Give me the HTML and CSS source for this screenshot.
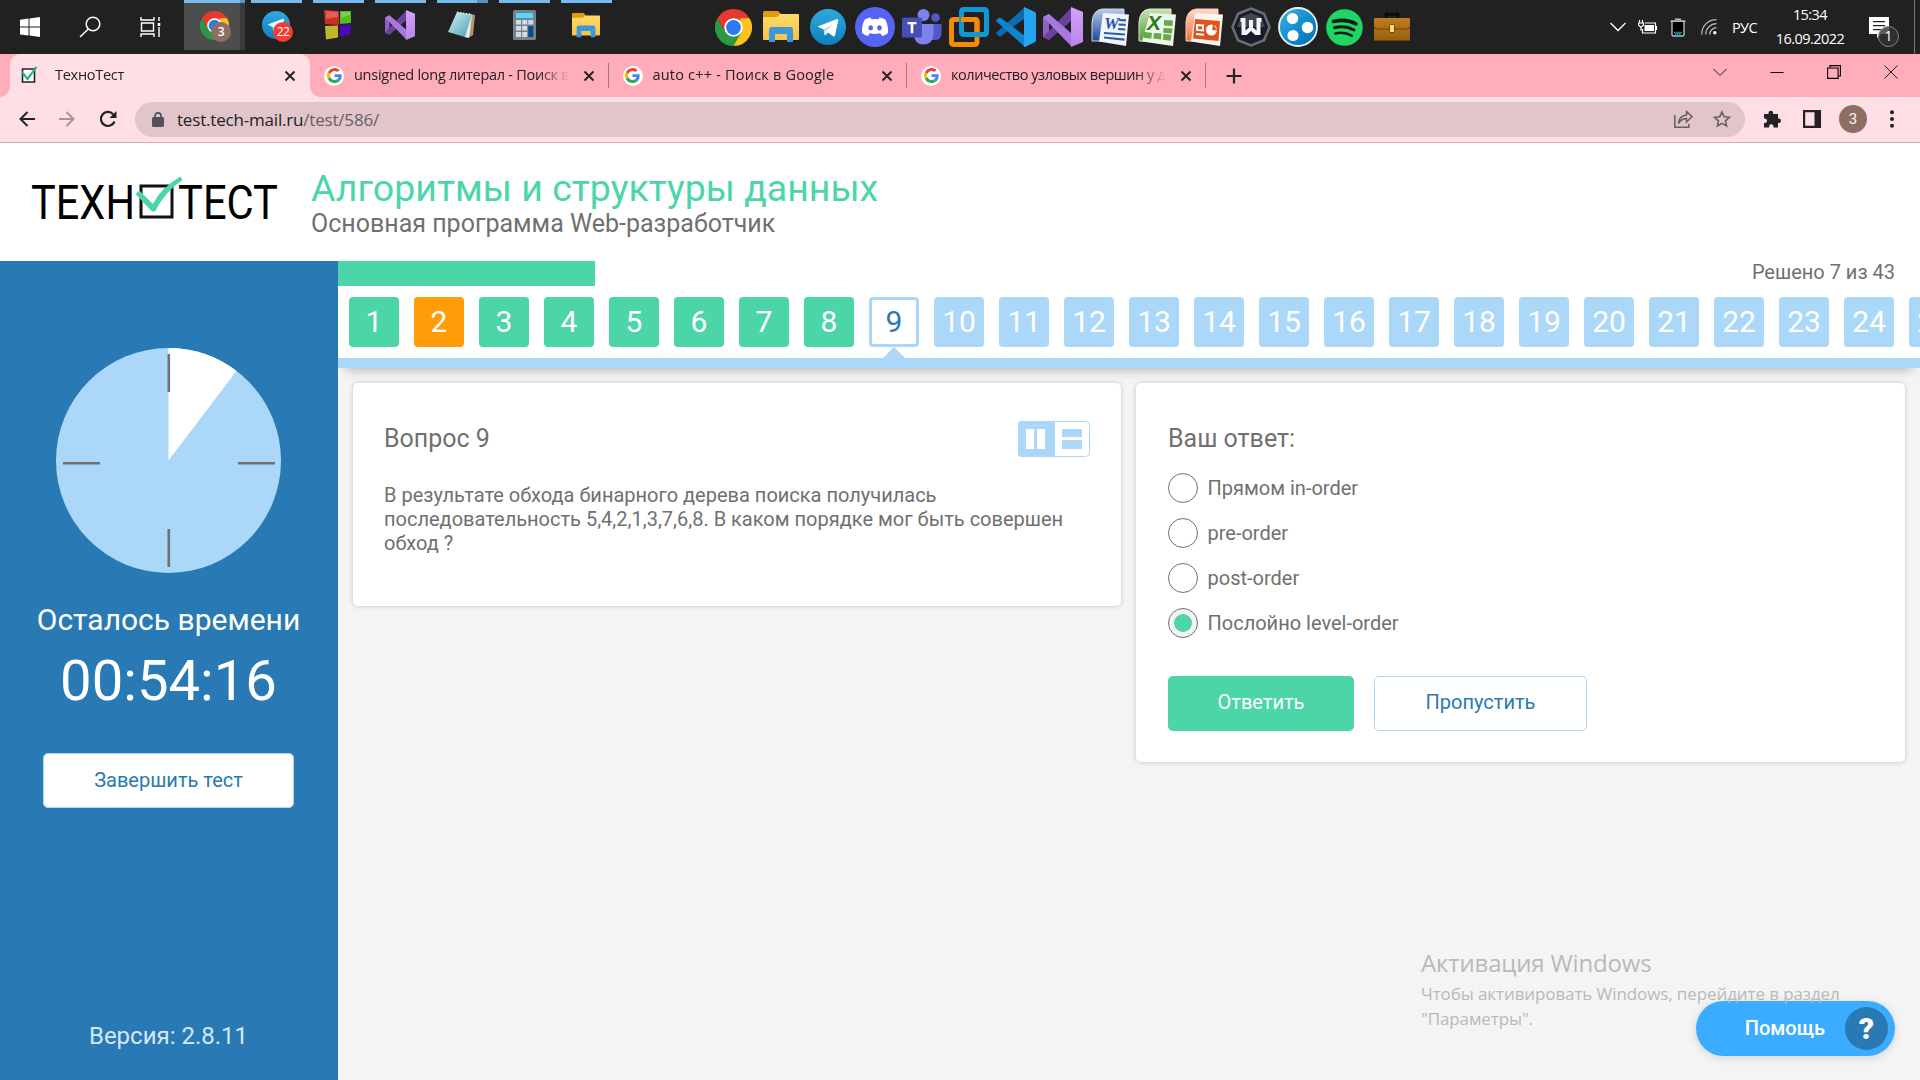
FILE: index.html
```html
<!DOCTYPE html>
<html lang="ru">
<head>
<meta charset="utf-8">
<title>ТехноТест</title>
<link rel="stylesheet" href="styles.css">
</head>
<body>
<svg class="defs" width="0" height="0">
  <defs>
    <linearGradient id="tgGrad" x1="0" y1="0" x2="0" y2="1"><stop offset="0" stop-color="#2fa9de"/><stop offset="1" stop-color="#0f80bd"/></linearGradient>
    <linearGradient id="folderGrad" x1="0" y1="0" x2="0" y2="1"><stop offset="0" stop-color="#ffd96b"/><stop offset="1" stop-color="#f7c443"/></linearGradient>
    <linearGradient id="vsGrad" x1="0" y1="0" x2="0" y2="1"><stop offset="0" stop-color="#d6a0ff"/><stop offset="1" stop-color="#b787ea"/></linearGradient>
    <linearGradient id="noteGrad" x1="0" y1="0" x2="1" y2="1"><stop offset="0" stop-color="#d7f1f6"/><stop offset="1" stop-color="#459eb2"/></linearGradient>
    <linearGradient id="hamGrad" x1="0" y1="0" x2="1" y2="1"><stop offset="0" stop-color="#43b4e4"/><stop offset=".6" stop-color="#0c86cb"/><stop offset="1" stop-color="#0a6fb4"/></linearGradient>
    <linearGradient id="wordGrad" x1="0" y1="0" x2="0" y2="1"><stop offset="0" stop-color="#b9cbe8"/><stop offset="1" stop-color="#164a9c"/></linearGradient>
    <linearGradient id="excelGrad" x1="0" y1="0" x2="0" y2="1"><stop offset="0" stop-color="#c6e3b5"/><stop offset="1" stop-color="#4d9a35"/></linearGradient>
    <linearGradient id="pptGrad" x1="0" y1="0" x2="0" y2="1"><stop offset="0" stop-color="#ffd9c8"/><stop offset="1" stop-color="#f0703a"/></linearGradient>
    <linearGradient id="caseGrad" x1="0" y1="0" x2="0" y2="1"><stop offset="0" stop-color="#c07c22"/><stop offset="1" stop-color="#96600f"/></linearGradient>
  </defs>
  <symbol id="chrome" viewBox="0 0 48 48">
    <path fill="#e53a2e" d="M24 24 3.2 12A24 24 0 0 1 44.8 12z"/>
    <path fill="#fcc31f" d="M24 24V12h20.8A24 24 0 0 1 24 48z"/>
    <path fill="#2b9846" d="M24 24l10.4 6L24 48A24 24 0 0 1 3.2 12l10.4 18z"/>
    <path fill="#e53a2e" d="M3.2 12 13.6 30 24 24 34 12z"/>
    <circle cx="24" cy="24" r="12" fill="#fff"/><circle cx="24" cy="24" r="9.6" fill="#2c7cf0"/>
  </symbol>
  <symbol id="folder" viewBox="0 0 36 32">
    <path fill="#e09b05" d="M0 1.5Q0 0 1.5 0H15l3 3v5H0z"/>
    <path fill="url(#folderGrad)" d="M0 6h14l3-3h18q1 0 1 1v24q0 1-1 1H1q-1 0-1-1z"/>
    <path fill="#3c97dc" d="M6 31V19q0-3 3-3h18q3 0 3 3v12h-6v-8H12v8z"/>
  </symbol>
  <symbol id="telegram" viewBox="0 0 36 36">
    <circle cx="18" cy="18" r="18" fill="url(#tgGrad)"/>
    <path fill="#fff" d="M7.500 17.500 27 10q1.500-.4 1.200 1.500L25 26.500q-.4 1.500-1.900.7l-5-3.700-2.600 2.500q-.7.600-1 0l-.8-5.500z"/>
    <path fill="#b5d8ec" d="m14 20.500 9.500-6.500-7.500 8-.9 4z"/>
  </symbol>
  <symbol id="vs" viewBox="0 0 40 40">
    <path fill="#8e62c4" d="M0 10 6 7v26l-6-3z"/>
    <path fill="#68429b" d="M0 30 28 1v13L6 33z"/>
    <path fill="#a878dc" d="M0 10 6 7 28 26v13z"/>
    <path fill="url(#vsGrad)" d="m28 0 12 5v30l-12 5z"/>
  </symbol>
  <symbol id="google" viewBox="0 0 48 48">
    <path fill="#ea4335" d="M24 9.500c3.500 0 6.700 1.200 9.200 3.600l6.900-6.900A24 24 0 0 0 2.600 13.200l8 6.200C12.400 13.700 17.700 9.500 24 9.500z"/>
    <path fill="#4285f4" d="M47 24.500c0-1.600-.2-3.100-.4-4.500H24v9h12.900c-.6 3-2.300 5.500-4.800 7.200l7.700 6c4.500-4.200 7.200-10.400 7.200-17.700z"/>
    <path fill="#fbbc05" d="M10.500 28.600a14.500 14.500 0 0 1 0-9.200l-8-6.200a24 24 0 0 0 0 21.600z"/>
    <path fill="#34a853" d="M24 48c6.500 0 11.900-2.100 15.900-5.800l-7.700-6A14.500 14.500 0 0 1 10.500 28.600l-8 6.200A24 24 0 0 0 24 48z"/>
  </symbol>
  <symbol id="close" viewBox="0 0 12 12"><path d="m1.500 1.500 9 9m0-9-9 9" stroke="#222" stroke-width="1.900" fill="none"/></symbol>
</svg>

<header class="taskbar">
  <div class="system-buttons">
    <svg width="20" height="20" viewBox="0 0 20 20"><path fill="#fff" d="M0 2.800 8.500 1.600v8H0zM9.500 1.500 20 0v9.600H9.500zM0 10.600h8.500v8L0 17.400zM9.500 10.600H20V20L9.500 18.600z"/></svg>
    <svg width="22" height="22" viewBox="0 0 22 22"><g fill="none" stroke="#fff" stroke-width="1.500"><circle cx="14" cy="8" r="6.800"/><path d="m9.300 13-8.300 8"/></g></svg>
    <svg width="22" height="22" viewBox="0 0 22 22"><path fill="none" stroke="#fff" stroke-width="1.400" d="M1 1v3h13V1M1 21v-3h13v3M1.500 7h12v8h-12zM19 1v4m0 6v10"/><path fill="#fff" d="M17.700 7h2.600v3h-2.600z"/></svg>
  </div>
  <nav class="running">
    <div class="app stacked active"><svg width="29" height="29"><use href="#chrome"/></svg><span class="count brown">3</span></div>
    <div class="app"><svg width="28" height="28"><use href="#telegram"/></svg><span class="count red">22</span></div>
    <div class="app"><svg width="28" height="30" viewBox="0 0 28 30"><path fill="#cf2d20" d="M0 0 15 1v14L1 14z"/><path fill="#55bb1e" d="M16 1h11v12l-11 1z"/><path fill="#bdb828" d="m1 16 13-.5v12L2 29.500z"/><path fill="#4c0bb0" d="M15.500 15.500 27 14l-.5 10.500-11 2.500z"/><path fill="#fff" opacity=".25" d="m2 1 12 1v5L2 9zm15 1h9v3l-9 3z"/></svg></div>
    <div class="app"><svg width="30" height="30"><use href="#vs"/></svg></div>
    <div class="app stacked"><svg width="28" height="28" viewBox="0 0 28 28"><path fill="#b29a69" d="m22 3 5 1-2 20-5 3z"/><path fill="#e8eeee" d="m10 2 14 2-3 23-5-1z"/><path fill="url(#noteGrad)" d="M9 1 24 3.500 17 26 0 21z"/><path stroke="#eee" stroke-width="1.500" stroke-dasharray="1.500 1.500" d="m9 1.200 15 2.400"/></svg></div>
    <div class="app"><svg width="23" height="30" viewBox="0 0 23 30"><rect width="23" height="30" rx="1.500" fill="#76838d"/><path fill="#4fdcfb" d="M3 3h17v5H3z"/><path fill="#d3dbe2" d="M3 10h5v4.500H3zM9.200 10h5v4.500h-5zM15.300 10h5v4.500h-5zM3 16h5v4.500H3zM9.200 16h5v4.500h-5zM3 22h5v5H3zM9.200 22h5v5h-5z"/><path fill="#0c4a8c" d="M15.300 16h5v11h-5z"/></svg></div>
    <div class="app"><svg width="28" height="25"><use href="#folder"/></svg></div>
  </nav>
  <nav class="quick">
    <svg width="37" height="37"><use href="#chrome"/></svg>
    <svg width="36" height="32"><use href="#folder"/></svg>
    <svg width="36" height="36"><use href="#telegram"/></svg>
    <svg width="40" height="40" viewBox="0 0 40 40"><circle cx="20" cy="20" r="20" fill="#5663f5"/><path fill="#fff" d="M15.500 10.500q-3 .4-5.700 2Q6.500 18.500 7 26q3 2.500 6 3l1.700-2.700q5.300 1.300 10.600 0L27 29q3.500-.7 6-3 .5-7.500-2.800-13.500-2.700-1.600-5.700-2l-1 1.800q-3.500-.6-7 0z"/><ellipse cx="15.700" cy="20.800" rx="2.300" ry="2.600" fill="#5663f5"/><ellipse cx="24.500" cy="20.800" rx="2.300" ry="2.600" fill="#5663f5"/></svg>
    <svg width="40" height="36" viewBox="0 0 40 36"><circle cx="33.500" cy="8.500" r="4.300" fill="#5059c9"/><path fill="#5059c9" d="M29 15h9.500q1 0 1 1v9q0 5-5.500 6h-5z"/><circle cx="21.500" cy="6" r="6" fill="#7b83eb"/><path fill="#7b83eb" d="M12 15h19.500v11q-1 9.500-10 9.500T12 26z"/><rect x="0" y="8.500" width="20" height="20" rx="1.500" fill="#464fb9"/><path fill="#fff" d="M5.500 13h9v2.300h-3.200v9H8.700v-9H5.500z"/></svg>
    <svg width="40" height="40" viewBox="0 0 40 40"><g fill="none" stroke-width="5"><rect x="2.500" y="12.500" width="25.500" height="25" rx="2" stroke="#f38b05"/><rect x="12.500" y="2.500" width="25" height="25" rx="2" stroke="#0f98d4"/><path stroke="#f38b05" d="M12 12.500h14q2 0 2 2V24"/></g></svg>
    <svg width="40" height="40" viewBox="0 0 40 40"><path fill="#0a6cb5" d="M1 25 29 0v11L5 29q-1.500.800-2.700-.3L.6 27q-1-1.200.4-2z"/><path fill="#0f83cc" d="M1 15 29 40V29L5 11q-1.500-.8-2.700.3L.6 13q-1 1.200.4 2z"/><path fill="#25a4f0" d="m28 0 11 5q1 .6 1 2v26q0 1.400-1 2l-10 5q-1.500 0-1-1z"/></svg>
    <svg width="40" height="40"><use href="#vs"/></svg>
    <svg width="38" height="38" viewBox="0 0 38 38"><path fill="url(#wordGrad)" stroke="#c6d5ed" d="M11 1h22v5L28 33H1V14Q2 2 11 1z"/><path fill="#f1f5fa" d="m12 5 26 1.500L35 38 8 33.500z"/><g stroke="#2c5cab" stroke-width="2.200"><path d="m28 12 7 .3M27.500 16.500l7.200.4M27 21l7.300.5M13 25l21 1.500M13 29.500l20.500 2.200"/></g><text x="13" y="21" class="office word">W</text></svg>
    <svg width="38" height="38" viewBox="0 0 38 38"><path fill="url(#excelGrad)" stroke="#d7edcb" d="M11 1h22v5L28 33H1V14Q2 2 11 1z"/><path fill="#eef6ea" d="m12 5 26 1.500L35 38 4 33.500z"/><path fill="#6aa84c" d="m26 12 9 .5-.5 5.500-8.500-.5zm-.5 8 9 .6-.6 5-8.700-.8zM6 24l8 .8-.7 6-8-1zm10 .9 7.500.7-.6 6-7.700-1zm9.500 1 8 .8-.7 6-8-1z"/><text x="9" y="22" class="office excel">X</text></svg>
    <svg width="38" height="38" viewBox="0 0 38 38"><path fill="url(#pptGrad)" stroke="#ffcfb9" d="M11 1h22v5L28 33H1V14Q2 2 11 1z"/><path fill="#fdf3ef" d="m10 5 28 1.500L35 38 6 33.500z"/><path fill="#e0531c" d="m10 11 25 2-1.500 20L8 30.500z"/><path fill="none" stroke="#fff" stroke-width="2" d="m12 17 6 .5v5l-6-.6zm-1 9 8 .7"/><circle cx="26.500" cy="22" r="5.500" fill="#fff"/><path fill="#e0531c" d="m27 22 1-6 4.500 6.500z"/></svg>
    <svg width="40" height="40" viewBox="0 0 40 40"><path fill="#171b2a" stroke="#686d76" stroke-width="2.500" d="m20 1.500 13 5.300L38.500 20 33 33.200 20 38.500 7 33.200 1.500 20 7 6.800z"/><path fill="#555966" d="m20 6 10 4 4 10H6l4-10z" opacity=".7"/><path fill="none" stroke="#f5f5f7" stroke-width="4" d="M9.500 13h3v13h2.500l5-5 5 5h2.500V13h3M20 13v9"/></svg>
    <svg width="40" height="40" viewBox="0 0 40 40"><circle cx="20" cy="20" r="19" fill="url(#hamGrad)" stroke="#e5f4fb" stroke-width="1.800"/><circle cx="14.500" cy="11.500" r="5.600" fill="#fff"/><circle cx="29.500" cy="20.500" r="5.800" fill="#fff"/><circle cx="15" cy="28.500" r="5.600" fill="#fff"/></svg>
    <svg width="37" height="37" viewBox="0 0 37 37"><circle cx="18.500" cy="18.500" r="18.300" fill="#1fd663"/><g fill="none" stroke="#191c1a" stroke-linecap="round"><path stroke-width="3.600" d="M7.500 12.500q12-3.200 22.500 2.300"/><path stroke-width="3" d="M8.500 18.700q10.500-2.700 19.500 2.300"/><path stroke-width="2.500" d="M9.300 24.500q9-2 16.500 2.200"/></g></svg>
    <svg width="36" height="28" viewBox="0 0 36 28"><path fill="none" stroke="#080808" stroke-width="2.500" d="M12 6V1.300h12V6"/><rect y="5" width="36" height="23" rx="1" fill="url(#caseGrad)"/><path fill="none" stroke="#6f430a" stroke-width="1.200" d="M0 14q1 2 4 2h28q3 0 4-2M0 27.500h36"/><rect x="15.500" y="11.500" width="5" height="8" rx="1" fill="#ffe064" stroke="#6b4209"/></svg>
  </nav>
  <div class="tray">
    <svg width="16" height="10" viewBox="0 0 16 10"><path fill="none" stroke="#fff" stroke-width="1.400" d="m.5 1 7.500 7.500L15.500 1"/></svg>
    <svg width="20" height="15" viewBox="0 0 20 15"><path fill="none" stroke="#fff" stroke-width="1.200" d="M7 3h10.500v10H4.500V9M18.500 6v4M1.500 0v3M4.500 0v3M.5 3h5v2L3.500 7h-1L.5 5zM3 7v3h2"/><path fill="#fff" d="M6.500 5H16v6H6.500z"/></svg>
    <svg width="16" height="19" viewBox="0 0 16 19"><path fill="#000" stroke="#bbb" stroke-width="1.400" d="M2 3h12v14l-1 1H3l-1-1zM.5 3.200h15M5 1.200h6"/><path fill="none" stroke="#0fb2b8" stroke-width="1.500" stroke-dasharray="1.500 .6" d="M4 14.500h8M5 16h6"/></svg>
    <svg width="16" height="16" viewBox="0 0 16 16"><g fill="none" stroke="#bbb" stroke-width="1.300"><path d="M.7 15.500C.7 7 7 .7 15.500.7M4.700 15.500c0-6 4.800-10.800 10.800-10.800M8.700 15.500c0-3.800 3-6.800 6.800-6.800"/></g><circle cx="13.800" cy="13.800" r="1.700" fill="#fff"/></svg>
    <span class="lang">РУС</span>
    <div class="clock"><span>15:34</span><span>16.09.2022</span></div>
    <div class="notice"><svg width="20" height="21" viewBox="0 0 20 21"><path fill="#fff" d="M0 0h20v17h-8l-4 4v-4H0z"/><path stroke="#222" stroke-width="1.200" d="M4 4.600h12M4 8.600h12M4 12.600h8"/></svg><span>1</span></div>
    <i class="peek"></i>
  </div>
</header>

<div class="tabstrip">
  <div class="tab current">
    <svg class="check-icon" width="18" height="18" viewBox="0 0 18 18"><path fill="#fff" stroke="#222" stroke-width="1.600" d="M1.500 3h12v13h-12z"/><path fill="none" stroke="#27b487" stroke-width="2.200" d="m1 6 5.500 7L15.500.8"/></svg>
    <span class="label">ТехноТест</span><svg width="12" height="12"><use href="#close"/></svg>
  </div>
  <div class="tab"><i class="favicon"><svg width="15" height="15"><use href="#google"/></svg></i><span class="label">unsigned long литерал - Поиск в Google</span><svg width="12" height="12"><use href="#close"/></svg></div>
  <div class="tab"><i class="favicon"><svg width="15" height="15"><use href="#google"/></svg></i><span class="label loose">auto c++ - Поиск в Google</span><svg width="12" height="12"><use href="#close"/></svg></div>
  <div class="tab"><i class="favicon"><svg width="15" height="15"><use href="#google"/></svg></i><span class="label tight">количество узловых вершин у дерева</span><svg width="12" height="12"><use href="#close"/></svg></div>
  <svg class="new-tab" width="16" height="16" viewBox="0 0 16 16"><path stroke="#222" stroke-width="2.200" d="M8 .5v15M.5 8h15"/></svg>
  <div class="window-controls">
    <svg width="14" height="14" viewBox="0 0 14 14"><path fill="none" stroke="#222" d="m.5 4 6.500 6.500L13.500 4"/></svg>
    <svg width="14" height="14" viewBox="0 0 14 14"><path stroke="#000" d="M.5 7.500h13"/></svg>
    <svg width="14" height="14" viewBox="0 0 14 14"><path fill="none" stroke="#000" stroke-width="1.100" d="M.6 3h10.500v10.400H.6zM3 3V.6h10.400V11H11"/></svg>
    <svg width="14" height="14" viewBox="0 0 14 14"><path stroke="#222" d="m.5.5 13 13m0-13-13 13"/></svg>
  </div>
</div>

<div class="toolbar">
  <svg width="16" height="16" viewBox="0 0 16 16"><path fill="none" stroke="#222" stroke-width="2" d="M16 8H1.500M8.500 1l-7 7 7 7"/></svg>
  <svg width="16" height="16" viewBox="0 0 16 16"><path fill="none" stroke="#a89298" stroke-width="2" d="M0 8h14.500M7.500 1l7 7-7 7"/></svg>
  <svg width="18" height="18" viewBox="0 0 18 18"><path fill="none" stroke="#222" stroke-width="2.200" d="M15.500 11.500A7 7 0 1 1 14.200 4.300"/><path fill="#222" d="M17.500 1v7h-7z"/></svg>
  <div class="omnibox">
    <svg width="12" height="15" viewBox="0 0 12 15"><rect y="5" width="12" height="10" rx="1.500" fill="#50545a"/><path fill="none" stroke="#50545a" stroke-width="1.700" d="M3 6V3.800a3 3 0 0 1 6 0V6"/></svg>
    <span class="url">test.tech-mail.ru<span>/test/586/</span></span>
    <svg width="19" height="18" viewBox="0 0 19 18"><path fill="none" stroke="#666064" stroke-width="1.500" d="M.8 5v12.200h14V14M4.500 13.500q.5-7.500 8-8.500V1.500L18 6.700 12.500 12V8.500q-5 0-8 5z"/></svg>
    <svg width="18" height="18" viewBox="0 0 18 18"><path fill="none" stroke="#666064" stroke-width="1.600" d="m9 2 2.200 4.700 5.200.6-3.900 3.500 1.100 5.100L9 13.300l-4.600 2.600 1.100-5.100L1.600 7.300l5.200-.6z"/></svg>
  </div>
  <svg width="18" height="18" viewBox="0 0 18 18"><path fill="#222" d="M1 4h4.500V3a2.300 2.300 0 0 1 4.600 0v1H15v4.500h.8a2.200 2.200 0 0 1 0 4.400H15V17.500h-4.500v-1a2.200 2.200 0 0 0-4.400 0v1H1V13h.8a2.200 2.200 0 0 0 0-4.400H1z"/></svg>
  <svg width="18" height="18" viewBox="0 0 18 18"><path fill="none" stroke="#222" stroke-width="2.200" d="M1.100 1.100h15.800v15.800H1.100z"/><path fill="#222" d="M11.500 1H17v16h-5.500z"/></svg>
  <span class="avatar">3</span>
  <svg width="4" height="18" viewBox="0 0 4 18"><g fill="#222"><circle cx="2" cy="2.200" r="2"/><circle cx="2" cy="9" r="2"/><circle cx="2" cy="15.800" r="2"/></g></svg>
</div>

<div class="page">
  <header class="masthead">
    <svg class="logo" width="252" height="58" viewBox="0 0 252 58">
      <text x="0" y="43.500" textLength="104" lengthAdjust="spacingAndGlyphs">ТЕХН</text>
      <text x="147" y="43.500" textLength="100" lengthAdjust="spacingAndGlyphs">ТЕСТ</text>
      <path fill="none" stroke="#111" stroke-width="3" d="M110 11h31v31h-31z"/>
      <path fill="#4dd5aa" d="m104.500 19 4-3.500L122 29q8-16.500 27.500-27.500l2 3.500q-17 11-27.500 31.500h-3z"/>
    </svg>
    <div class="course">
      <h1>Алгоритмы и структуры данных</h1>
      <p>Основная программа Web-разработчик</p>
    </div>
  </header>
  <div class="columns">
    <aside class="sidebar">
      <svg class="dial" width="225" height="225" viewBox="0 0 225 225"><circle cx="112.500" cy="112.500" r="112.500" fill="#abd8f8"/><path fill="#fff" d="M112.500 112.500V0a112.500 112.500 0 0 1 68 22.900z"/><path stroke="#707070" stroke-width="2.600" d="M112.800 6v38M112.800 181v38M7 115.300h37M182 115.300h37"/></svg>
      <p class="remaining">Осталось времени</p>
      <p class="timer">00:54:16</p>
      <button class="btn finish">Завершить тест</button>
      <p class="version">Версия: 2.8.11</p>
    </aside>
    <main>
      <section class="progress">
        <div class="progress-row"><div class="progress-fill"></div><span>Решено 7 из 43</span></div>
        <ol class="tiles">
          <li class="done">1</li><li class="skipped">2</li><li class="done">3</li><li class="done">4</li><li class="done">5</li><li class="done">6</li><li class="done">7</li><li class="done">8</li><li class="now">9</li><li>10</li><li>11</li><li>12</li><li>13</li><li>14</li><li>15</li><li>16</li><li>17</li><li>18</li><li>19</li><li>20</li><li>21</li><li>22</li><li>23</li><li>24</li><li>25</li>
        </ol>
      </section>
      <div class="cards">
        <article class="card question">
          <div class="card-head"><h2>Вопрос 9</h2>
            <svg width="72" height="36" viewBox="0 0 72 36"><rect x=".5" y=".5" width="71" height="35" rx="4" fill="#fff" stroke="#abd8f8"/><path fill="#abd8f8" d="M4 0h33v36H4q-4 0-4-4V4q0-4 4-4z"/><path fill="#fff" d="M8 8h8v20H8zM19 8h8v20h-8z"/><path fill="#abd8f8" d="M44 8h20v8H44zM44 19h20v9H44z"/></svg>
          </div>
          <p>В результате обхода бинарного дерева поиска получилась последовательность 5,4,2,1,3,7,6,8. В каком порядке мог быть совершен обход ?</p>
        </article>
        <article class="card answer">
          <h2>Ваш ответ:</h2>
          <ul class="options">
            <li><i class="radio"></i>Прямом in-order</li>
            <li><i class="radio"></i>pre-order</li>
            <li><i class="radio"></i>post-order</li>
            <li><i class="radio checked"></i>Послойно level-order</li>
          </ul>
          <div class="actions"><button class="btn primary">Ответить</button><button class="btn skip">Пропустить</button></div>
        </article>
      </div>
    </main>
  </div>
</div>
<button class="help"><span>Помощь</span><i>?</i></button>
<div class="activation"><h3>Активация Windows</h3><p>Чтобы активировать Windows, перейдите в раздел<br>"Параметры".</p></div>
</body>
</html>
```
FILE: styles.css
```css
* { box-sizing: border-box; margin: 0; padding: 0; }
body { width: 1920px; height: 1080px; overflow: hidden; position: relative; font-family: Roboto, sans-serif; font-size: 20px; color: #707070; background: #f4f4f4; display: flex; flex-direction: column; }
svg { display: block; flex: none; }
.defs { position: absolute; }
i { font-style: normal; }
button { font: inherit; border: 0; }
ol, ul { list-style: none; }

/* Windows taskbar */
.taskbar { height: 54px; flex: none; background: #212121; display: flex; font-family: "Open Sans", sans-serif; color: #fff; }
.system-buttons { width: 184px; display: flex; align-items: center; gap: 39px; padding-left: 20px; }
.running { width: 434px; display: flex; }
.app { width: 62px; height: 50px; position: relative; display: flex; align-items: center; justify-content: center; padding-right: 2px; }
.app::before { content: ""; position: absolute; top: 0; left: 5px; width: 51px; height: 3px; background: #76b9ed; }
.app.active { background: linear-gradient(90deg, #4d4d4d 56px, #3a3a3a 56px); width: 61px; margin-right: 1px; padding-right: 0; }
.app.active::before { left: 0; width: 61px; }
.app.stacked::before { background: linear-gradient(90deg, #76b9ed 40px, #5a92c2 40px); }
.app.active.stacked::before { background: linear-gradient(90deg, #76b9ed 56px, #5a92c2 56px); }
.count { position: absolute; left: 27px; top: 22px; width: 20px; height: 20px; border-radius: 50%; font-size: 12px; line-height: 20px; text-align: center; letter-spacing: -.5px; }
.brown { background: #8d6e63; font-weight: 600; }
.red { background: #f23c34; }
.quick { margin-left: 92px; display: grid; grid-template-columns: repeat(15, 47px); justify-items: center; align-items: center; }
.office { font: italic bold 17px "Liberation Serif", serif; }
.word { fill: #2456a5; }
.excel { fill: #2c7a1d; font: italic bold 21px "Liberation Sans", sans-serif; }
.tray { margin-left: auto; display: flex; align-items: center; padding-right: 5px; }
.tray > svg:nth-child(2) { margin-left: 12px; }
.tray > svg:nth-child(3) { margin-left: 12px; }
.tray > svg:nth-child(4) { margin-left: 15px; }
.lang { width: 26px; margin-left: 15px; font-size: 14.500px; letter-spacing: -.6px; }
.clock { width: 70px; margin-left: 17px; text-align: center; font-size: 14.500px; line-height: 24px; letter-spacing: -.55px; display: flex; flex-direction: column; white-space: nowrap; padding-bottom: 1px; }
.notice { width: 30px; height: 30px; margin-left: 24px; margin-top: 10px; position: relative; }
.notice span { position: absolute; left: 9px; top: 9px; width: 21px; height: 21px; border: 1px solid #888; border-radius: 50%; background: #333c; font-size: 14px; line-height: 18px; text-align: center; }
.peek { width: 1px; height: 54px; background: #777; margin-left: 15px; }

/* Browser tabs */
.tabstrip { height: 43px; flex: none; background: #ffacbb; display: flex; align-items: center; padding-left: 10px; font: 14.500px "Open Sans", sans-serif; color: #222; }
.tab { width: 298.500px; height: 43px; display: flex; align-items: center; padding: 0 14px 0 14px; position: relative; }
.tab:not(.current)::after { content: ""; position: absolute; right: 0; top: 9px; height: 25px; border-right: 1px solid #a8737d; }
.current { width: 300px; padding: 0 14px 0 16px; background: #ffdfe5; border-radius: 10px 10px 0 0; }
.current::before, .current::after { content: ""; position: absolute; bottom: 0; width: 10px; height: 10px; }
.current::before { left: -10px; background: radial-gradient(circle at 0 0, #ffacbb 9.500px, #ffdfe5 10px); }
.current::after { right: -10px; background: radial-gradient(circle at 100% 0, #ffacbb 9.500px, #ffdfe5 10px); }
.label { flex: 1; margin: 0 14px 0 10px; overflow: hidden; white-space: nowrap; letter-spacing: -.27px; line-height: 24px; padding-bottom: 2px; -webkit-mask-image: linear-gradient(90deg, #000 calc(100% - 30px), transparent); mask-image: linear-gradient(90deg, #000 calc(100% - 30px), transparent); }
.label.loose { letter-spacing: .2px; }
.label.tight { letter-spacing: -.45px; }
.current .label { margin-left: 11px; }
.current .check-icon { margin: 0 0 2px -5px; }
.current .label { margin-left: 16px; }
.favicon { width: 20px; height: 20px; border-radius: 50%; background: #fff; display: grid; place-items: center; }
.new-tab { margin-left: 20px; }
.window-controls { margin-left: auto; display: flex; gap: 43px; padding: 0 22px 7px 0; }

/* Browser toolbar */
.toolbar { height: 46px; flex: none; background: #ffdfe5; border-bottom: 1px solid #c9b0b5; display: flex; align-items: center; padding: 0 26px 1px 19px; }
.toolbar > svg:nth-child(2) { margin-left: 24px; }
.toolbar > svg:nth-child(3) { margin-left: 24px; }
.omnibox { width: 1610px; height: 35px; margin: 0 18px; border-radius: 18px; background: #e1c5ca; display: flex; align-items: center; padding: 0 14px 0 17px; }
.url { flex: 1; margin-left: 13px; font: 17px "Open Sans", sans-serif; letter-spacing: -.19px; color: #222; }
.url span { color: #666064; }
.omnibox > svg:last-child { margin-left: 20px; }
.toolbar > svg:nth-child(6) { margin-left: 22px; }
.avatar { width: 28px; height: 28px; margin: 0 23px 0 18px; border-radius: 50%; background: #8d6e63; color: #fff; font-size: 15px; line-height: 28px; text-align: center; }

/* Page */
.page { flex: 1; display: flex; flex-direction: column; }
.masthead { height: 118px; background: #fff; display: flex; padding: 32px 0 0 31px; }
.logo { overflow: visible; }
.logo text { font: 49px Roboto, sans-serif; fill: #000; }
.course { margin-left: 28px; }
.course h1 { font-size: 37.500px; font-weight: 400; line-height: 44px; color: #4dd5aa; margin-top: -9px; }
.course p { font-size: 25px; line-height: 28px; }
.columns { flex: 1; display: flex; }
.sidebar { width: 338px; background: #2979b5; color: #fff; text-align: center; display: flex; flex-direction: column; align-items: center; padding: 87px 1px 26px 0; }
.remaining { font-size: 30px; line-height: 36px; margin-top: 29px; }
.timer { font-size: 56.250px; line-height: 66px; margin-top: 10px; }
.finish { width: 251px; height: 55px; margin-top: 39px; color: #2979b5; background: #fff; border: 1px solid #abd8f8; }
.btn { border-radius: 5px; padding-bottom: 2px; }
.version { margin-top: auto; font-size: 24px; line-height: 36px; color: #d5e8f6; }
main { width: 1582px; display: flex; flex-direction: column; }
.progress { height: 107px; background: #fff; border-bottom: 10px solid #abd8f8; box-shadow: 0 10px 10px -8px #0004; overflow-x: clip; }
.progress-row { height: 25px; display: flex; justify-content: space-between; padding-right: 25px; }
.progress-row span { line-height: 23px; }
.progress-fill { width: 257px; background: #4dd5aa; }
.tiles { display: flex; gap: 15px; padding: 11px 0 0 11px; }
.tiles li { flex: none; width: 50px; height: 50px; border-radius: 4px; background: #abd8f8; color: #fff; font-size: 30px; line-height: 49px; text-align: center; position: relative; }
.tiles .done { background: #4dd5aa; }
.tiles .skipped { background: #ff9c08; }
.tiles .now { background: #fff; color: #2979b5; border: 3px solid #abd8f8; line-height: 43px; }
.now::after { content: ""; position: absolute; left: 11px; top: 47px; border: 11px solid transparent; border-top: 0; border-bottom-color: #abd8f8; }
.cards { display: flex; gap: 15px; padding: 15px; align-items: flex-start; }
.card { background: #fff; border-radius: 5px; box-shadow: 0 0 5px #0003; }
.card h2 { font-size: 25px; line-height: 30px; font-weight: 400; }
.question { width: 768px; height: 223px; padding: 38px 31px 0; }
.card-head { display: flex; justify-content: space-between; }
.card-head h2 { line-height: 36px; }
.question p { line-height: 24px; margin-top: 26px; }
.answer { width: 769px; height: 379px; padding: 41px 32px 0; }
.options { margin-top: 19px; }
.options li { height: 30px; margin-bottom: 15px; display: flex; align-items: center; gap: 9.500px; }
.radio { width: 30px; height: 30px; border: 1px solid #707070; border-radius: 50%; display: grid; place-items: center; }
.checked { background: #f4f4f4; }
.checked::after { content: ""; width: 18px; height: 18px; border-radius: 50%; background: #4dd5aa; }
.actions { display: flex; gap: 20px; margin-top: 38px; }
.primary { width: 186px; height: 55px; background: #4dd5aa; color: #fff; padding-bottom: 3px; }
.skip { width: 213px; height: 55px; background: #fff; color: #2979b5; border: 1px solid #abd8f8; padding-bottom: 3px; }

/* Overlays */
.help { position: absolute; right: 25px; bottom: 24px; width: 199px; height: 55px; border-radius: 28px; background: #3bacff; color: #fff; font-weight: 500; display: flex; align-items: center; justify-content: flex-end; gap: 20px; padding-right: 7px; box-shadow: 0 2px 10px #0002; }
.help span { padding-bottom: 1px; }
.help i { width: 43px; height: 43px; border-radius: 50%; background: #2979b5; font-size: 30px; font-weight: 900; line-height: 43px; }
.activation { position: absolute; left: 1421px; top: 945px; color: #b9b9b9; font-family: "Open Sans", sans-serif; white-space: nowrap; }
.activation h3 { font-weight: 400; font-size: 24px; line-height: 36px; letter-spacing: -.15px; }
.activation p { font-size: 17px; line-height: 25px; letter-spacing: -.1px; }
```
